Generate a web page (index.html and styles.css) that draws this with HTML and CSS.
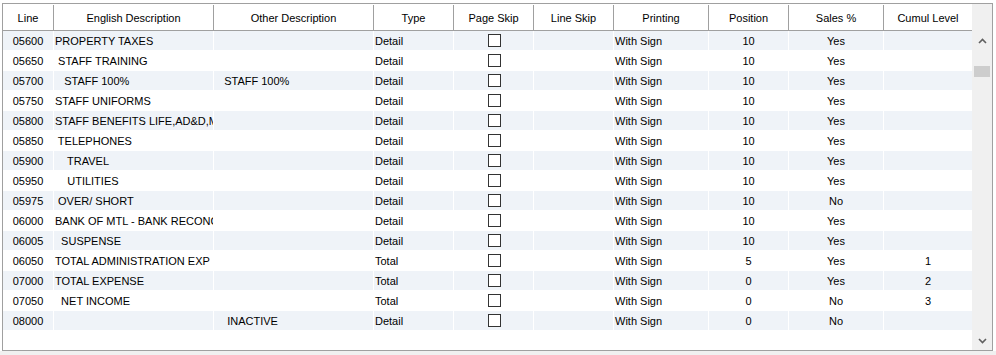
FILE: index.html
```html
<!DOCTYPE html>
<html>
<head>
<meta charset="utf-8">
<link rel="stylesheet" href="styles.css">
</head>
<body>
<div class="page">
  <div class="frame">
    <div class="grid">
      <div class="head">
        <div class="hc">Line</div>
        <div class="hc">English Description</div>
        <div class="hc">Other Description</div>
        <div class="hc">Type</div>
        <div class="hc">Page Skip</div>
        <div class="hc">Line Skip</div>
        <div class="hc">Printing</div>
        <div class="hc">Position</div>
        <div class="hc">Sales %</div>
        <div class="hc last">Cumul Level</div>
      </div>
      <div class="body">
        <div class="row alt"><div class="c ctr">05600</div><div class="c">PROPERTY TAXES</div><div class="c"></div><div class="c">Detail</div><div class="c ctr"><span class="cb"></span></div><div class="c"></div><div class="c">With Sign</div><div class="c ctr">10</div><div class="c ctr">Yes</div><div class="c ctr last"></div></div>
        <div class="row"><div class="c ctr">05650</div><div class="c"> STAFF TRAINING</div><div class="c"></div><div class="c">Detail</div><div class="c ctr"><span class="cb"></span></div><div class="c"></div><div class="c">With Sign</div><div class="c ctr">10</div><div class="c ctr">Yes</div><div class="c ctr last"></div></div>
        <div class="row alt"><div class="c ctr">05700</div><div class="c">   STAFF 100%</div><div class="c">   STAFF 100%</div><div class="c">Detail</div><div class="c ctr"><span class="cb"></span></div><div class="c"></div><div class="c">With Sign</div><div class="c ctr">10</div><div class="c ctr">Yes</div><div class="c ctr last"></div></div>
        <div class="row"><div class="c ctr">05750</div><div class="c">STAFF UNIFORMS</div><div class="c"></div><div class="c">Detail</div><div class="c ctr"><span class="cb"></span></div><div class="c"></div><div class="c">With Sign</div><div class="c ctr">10</div><div class="c ctr">Yes</div><div class="c ctr last"></div></div>
        <div class="row alt"><div class="c ctr">05800</div><div class="c">STAFF BENEFITS LIFE,AD&amp;D,M</div><div class="c"></div><div class="c">Detail</div><div class="c ctr"><span class="cb"></span></div><div class="c"></div><div class="c">With Sign</div><div class="c ctr">10</div><div class="c ctr">Yes</div><div class="c ctr last"></div></div>
        <div class="row"><div class="c ctr">05850</div><div class="c"> TELEPHONES</div><div class="c"></div><div class="c">Detail</div><div class="c ctr"><span class="cb"></span></div><div class="c"></div><div class="c">With Sign</div><div class="c ctr">10</div><div class="c ctr">Yes</div><div class="c ctr last"></div></div>
        <div class="row alt"><div class="c ctr">05900</div><div class="c">    TRAVEL</div><div class="c"></div><div class="c">Detail</div><div class="c ctr"><span class="cb"></span></div><div class="c"></div><div class="c">With Sign</div><div class="c ctr">10</div><div class="c ctr">Yes</div><div class="c ctr last"></div></div>
        <div class="row"><div class="c ctr">05950</div><div class="c">    UTILITIES</div><div class="c"></div><div class="c">Detail</div><div class="c ctr"><span class="cb"></span></div><div class="c"></div><div class="c">With Sign</div><div class="c ctr">10</div><div class="c ctr">Yes</div><div class="c ctr last"></div></div>
        <div class="row alt"><div class="c ctr">05975</div><div class="c"> OVER/ SHORT</div><div class="c"></div><div class="c">Detail</div><div class="c ctr"><span class="cb"></span></div><div class="c"></div><div class="c">With Sign</div><div class="c ctr">10</div><div class="c ctr">No</div><div class="c ctr last"></div></div>
        <div class="row"><div class="c ctr">06000</div><div class="c">BANK OF MTL - BANK RECONC</div><div class="c"></div><div class="c">Detail</div><div class="c ctr"><span class="cb"></span></div><div class="c"></div><div class="c">With Sign</div><div class="c ctr">10</div><div class="c ctr">Yes</div><div class="c ctr last"></div></div>
        <div class="row alt"><div class="c ctr">06005</div><div class="c">  SUSPENSE</div><div class="c"></div><div class="c">Detail</div><div class="c ctr"><span class="cb"></span></div><div class="c"></div><div class="c">With Sign</div><div class="c ctr">10</div><div class="c ctr">Yes</div><div class="c ctr last"></div></div>
        <div class="row"><div class="c ctr">06050</div><div class="c">TOTAL ADMINISTRATION EXP</div><div class="c"></div><div class="c">Total</div><div class="c ctr"><span class="cb"></span></div><div class="c"></div><div class="c">With Sign</div><div class="c ctr">5</div><div class="c ctr">Yes</div><div class="c ctr last">1</div></div>
        <div class="row alt"><div class="c ctr">07000</div><div class="c">TOTAL EXPENSE</div><div class="c"></div><div class="c">Total</div><div class="c ctr"><span class="cb"></span></div><div class="c"></div><div class="c">With Sign</div><div class="c ctr">0</div><div class="c ctr">Yes</div><div class="c ctr last">2</div></div>
        <div class="row"><div class="c ctr">07050</div><div class="c">  NET INCOME</div><div class="c"></div><div class="c">Total</div><div class="c ctr"><span class="cb"></span></div><div class="c"></div><div class="c">With Sign</div><div class="c ctr">0</div><div class="c ctr">No</div><div class="c ctr last">3</div></div>
        <div class="row alt"><div class="c ctr">08000</div><div class="c"></div><div class="c">    INACTIVE</div><div class="c">Detail</div><div class="c ctr"><span class="cb"></span></div><div class="c"></div><div class="c">With Sign</div><div class="c ctr">0</div><div class="c ctr">No</div><div class="c ctr last"></div></div>
      </div>
    </div>
    <div class="sb">
      <div class="sb-btn">
        <svg width="9" height="6" viewBox="0 0 9 6"><path d="M1 5 L4.5 1.5 L8 5" fill="none" stroke="#606060" stroke-width="1.6"/></svg>
      </div>
      <div class="sb-thumb"></div>
      <div class="sb-btn sb-down">
        <svg width="9" height="6" viewBox="0 0 9 6"><path d="M1 1 L4.5 4.5 L8 1" fill="none" stroke="#606060" stroke-width="1.6"/></svg>
      </div>
    </div>
  </div>
</div>
<div class="footer"></div>
</body>
</html>
```
FILE: styles.css
```css
html, body {
  margin: 0;
  padding: 0;
  background: #ffffff;
}
body {
  width: 996px;
  height: 355px;
  overflow: hidden;
  font-family: "Liberation Sans", Arial, sans-serif;
  font-size: 11px;
  color: #000000;
}
.page {
  padding: 3px 0 0 2px;
}
.frame {
  box-sizing: border-box;
  width: 991px;
  height: 348px;
  border: 1px solid #a0a0a0;
  display: flex;
  background: #ffffff;
}
.grid {
  width: 969px;
  display: flex;
  flex-direction: column;
}
.head {
  display: grid;
  grid-template-columns: 51px 160px 160px 80px 80px 80px 95px 80px 95px 88px;
  height: 27px;
  box-sizing: border-box;
  padding-top: 1px;
  border-bottom: 1px solid #a0a0a0;
}
.hc {
  box-sizing: border-box;
  height: 25px;
  line-height: 26px;
  text-align: center;
  border-right: 1px solid #a0a0a0;
  white-space: nowrap;
  overflow: hidden;
}
.hc.last {
  border-right: none;
}
.row {
  display: grid;
  grid-template-columns: 51px 160px 160px 80px 80px 80px 95px 80px 95px 88px;
  height: 20px;
}
.c {
  box-sizing: border-box;
  height: 20px;
  line-height: 21px;
  border-right: 1px solid #ffffff;
  border-bottom: 1px solid #ffffff;
  padding-left: 1px;
  white-space: pre;
  overflow: hidden;
}
.c.last {
  border-right: none;
}
.ctr {
  text-align: center;
  padding-left: 0;
}
.row.alt .c {
  background: #eff3f8;
}
.cb {
  display: inline-block;
  box-sizing: border-box;
  width: 13px;
  height: 13px;
  border: 1px solid #333333;
  background: #ffffff;
  vertical-align: top;
  margin-top: 3px;
  margin-left: 1px;
}
.sb {
  width: 20px;
  background: #f0f0f0;
  display: flex;
  flex-direction: column;
  align-items: center;
}
.sb-btn {
  height: 17px;
  width: 16px;
  margin-top: 28px;
  display: flex;
  align-items: center;
  justify-content: center;
}
.sb-thumb {
  width: 16px;
  height: 11px;
  margin-top: 17px;
  background: #cdcdcd;
}
.sb-down {
  margin-top: auto;
  margin-bottom: 1px;
}
.footer {
  height: 4px;
  background: #f0f0f0;
}
```
